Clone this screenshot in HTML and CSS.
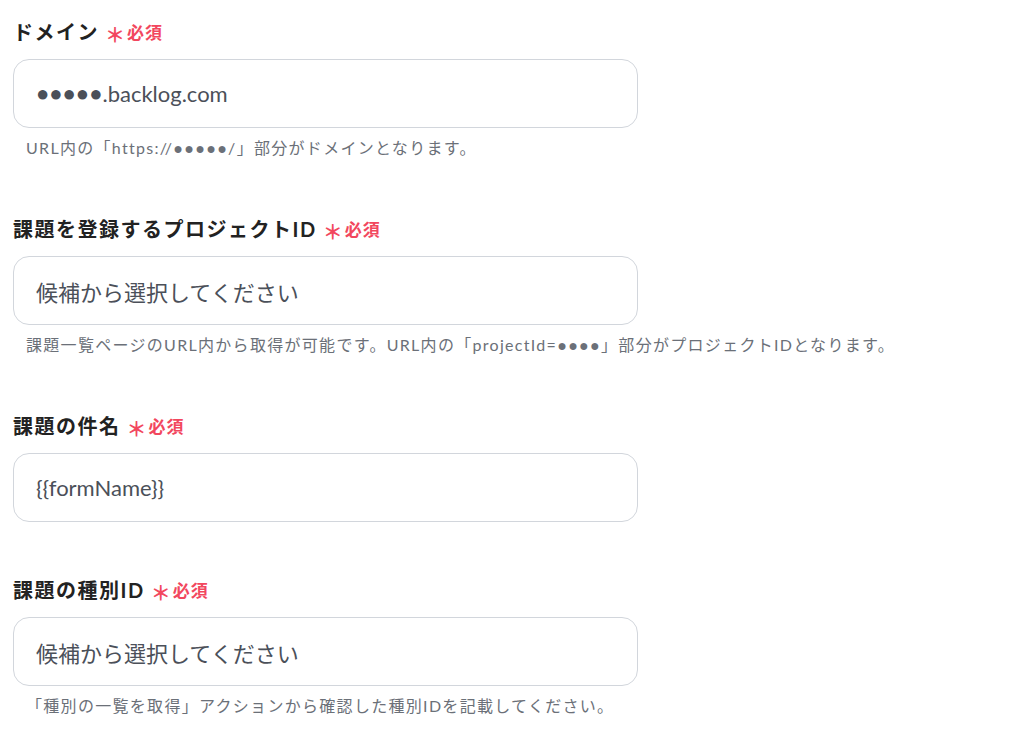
FILE: index.html
```html
<!DOCTYPE html>
<html>

<head>
    <meta charset="utf-8">
    <meta content="width=device-width, initial-scale=1" name="viewport">
    <title>Backlog 設定</title>
    <link rel="stylesheet" href="styles.css">
</head>

<body>
    <div class="form">
        <!-- ドメイン -->
        <div class="field">
            <label class="title">ドメイン<span class="mark">＊</span><span class="required">必須</span></label>
            <div class="input"><span class="dots">●●●●●</span>.backlog.com</div>
            <p class="help">URL内の「https://<span class="dots">●●●●●</span>/」部分がドメインとなります。</p>
        </div>

        <!-- プロジェクトID -->
        <div class="field">
            <label class="title">課題を登録するプロジェクトID<span class="mark">＊</span><span class="required">必須</span></label>
            <div class="input">候補から選択してください</div>
            <p class="help">課題一覧ページのURL内から取得が可能です。URL内の「projectId=<span class="dots">●●●●</span>」部分がプロジェクトIDとなります。</p>
        </div>

        <!-- 件名 -->
        <div class="field">
            <label class="title">課題の件名<span class="mark">＊</span><span class="required">必須</span></label>
            <div class="input">{{formName}}</div>
        </div>

        <!-- 種別ID -->
        <div class="field">
            <label class="title">課題の種別ID<span class="mark">＊</span><span class="required">必須</span></label>
            <div class="input">候補から選択してください</div>
            <p class="help">「種別の一覧を取得」アクションから確認した種別IDを記載してください。</p>
        </div>
    </div>
</body>

</html>
```

FILE: styles.css
```css
body {
    margin: 0;
    padding: 0;
    background-color: white;
    font-family: Lato, "Noto Sans CJK JP", sans-serif;
}

.dots {
    font-family: "Liberation Sans", sans-serif;
    line-height: 1;
}

.form {
    padding: 19px 13px 0;
    width: 625px;
}

.field {
    margin-bottom: 55px;
}

.field .title {
    display: flex;
    align-items: center;
    height: 24px;
    font-size: 20px;
    font-weight: bold;
    letter-spacing: 1.5px;
    color: #222;
    margin-bottom: 16px;
}

.field .title .mark {
    color: #f2475e;
    font-size: 20px;
    letter-spacing: 0;
    margin: 6px 0 0 6px;
    width: 16px;
    text-align: center;
}

.field .title .required {
    color: #f2475e;
    font-size: 17px;
    letter-spacing: 1px;
    margin-left: 6px;
}

.field .input {
    box-sizing: border-box;
    height: 69px;
    border: 1px solid #d2d6dc;
    border-radius: 16px;
    padding: 0 22px;
    display: flex;
    align-items: center;
    font-size: 22px;
    color: #4b5059;
}

.field .help {
    margin: 9px 0 0 13px;
    height: 22px;
    padding-bottom: 2px;
    line-height: 22px;
    font-size: 16px;
    letter-spacing: 1.3px;
    color: #6b7078;
    white-space: nowrap;
}
```
